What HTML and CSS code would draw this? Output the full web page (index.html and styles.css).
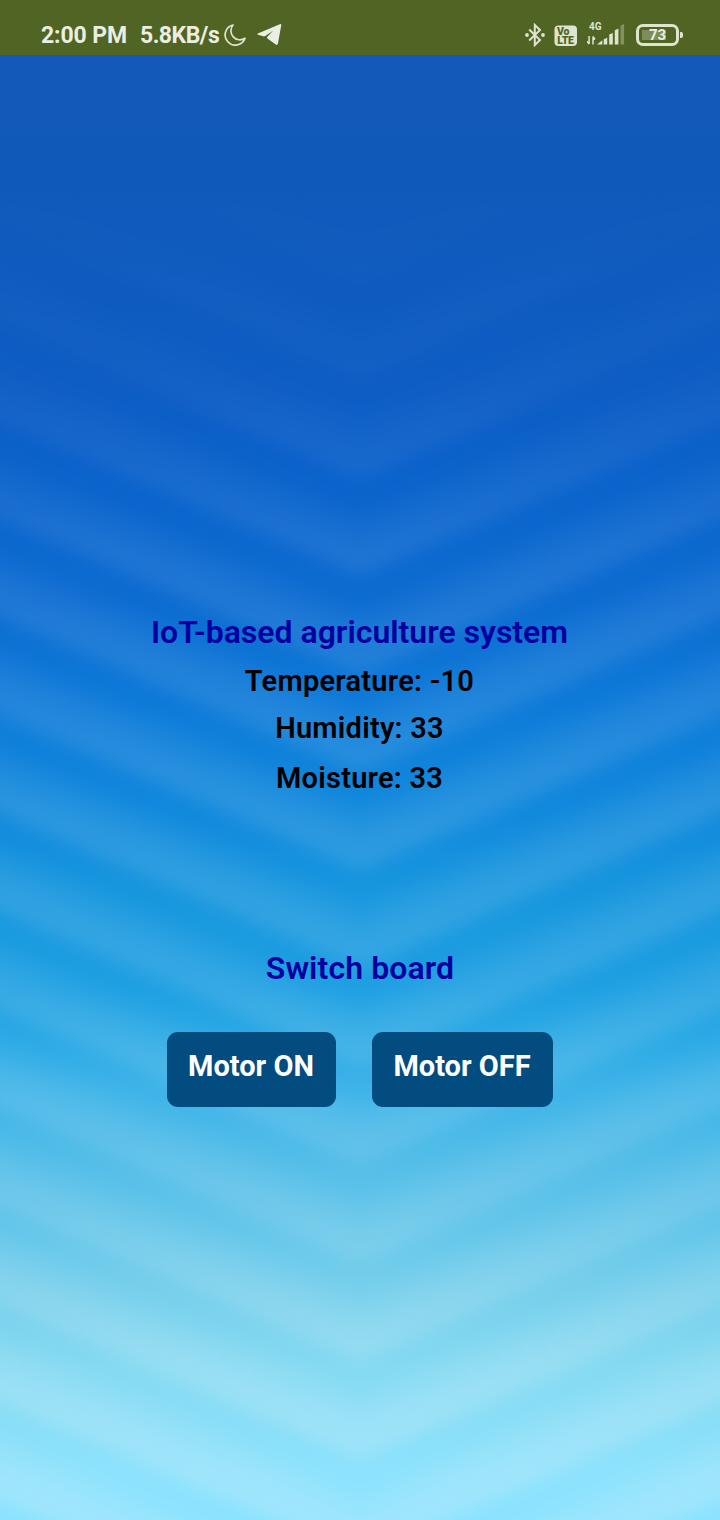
FILE: index.html
```html
<!DOCTYPE html>
<html lang="en">
<head>
<meta charset="utf-8">
<title>IoT-based agriculture system</title>
<link rel="stylesheet" href="styles.css">
</head>
<body>
<div class="screen">
  <svg class="backdrop" width="720" height="1520" viewBox="0 0 720 1520" aria-hidden="true">
    <defs>
      <linearGradient id="base" gradientUnits="userSpaceOnUse" x1="0" y1="0" x2="0" y2="1520">
        <stop offset="0" stop-color="#1559b9"/>
        <stop offset=".08" stop-color="#1359b9"/>
        <stop offset=".1" stop-color="#1059b9"/>
        <stop offset=".2" stop-color="#0e5bc0"/>
        <stop offset=".26" stop-color="#0d5dc6"/>
        <stop offset=".33" stop-color="#0a64cd"/>
        <stop offset=".395" stop-color="#0b6bd1"/>
        <stop offset=".46" stop-color="#0c79d8"/>
        <stop offset=".526" stop-color="#0f87dc"/>
        <stop offset=".585" stop-color="#1595de"/>
        <stop offset=".65" stop-color="#1d9fe2"/>
        <stop offset=".68" stop-color="#28a8e5"/>
        <stop offset=".717" stop-color="#3cb3e8"/>
        <stop offset=".783" stop-color="#5ac1e9"/>
        <stop offset=".849" stop-color="#75cfec"/>
        <stop offset=".9" stop-color="#84daf2"/>
        <stop offset=".97" stop-color="#8be2fd"/>
        <stop offset="1" stop-color="#8ae3ff"/>
      </linearGradient>
      <linearGradient id="left" gradientUnits="userSpaceOnUse" spreadMethod="repeat" x1="360" y1="1453" x2="324.4" y2="1535.7">
        <stop offset="0" stop-color="#ebf2f6" stop-opacity=".25"/>
        <stop offset=".1" stop-color="#ebf2f6" stop-opacity="0"/>
        <stop offset=".35" stop-color="#ebf2f6" stop-opacity=".02"/>
        <stop offset=".65" stop-color="#ebf2f6" stop-opacity=".17"/>
        <stop offset="1" stop-color="#ebf2f6" stop-opacity=".25"/>
      </linearGradient>
      <linearGradient id="right" href="#left" x1="360" y1="1453" x2="395.6" y2="1535.7"/>
      <linearGradient id="fade" gradientUnits="userSpaceOnUse" x1="0" y1="0" x2="0" y2="1520">
        <stop offset=".1" stop-color="#000"/>
        <stop offset=".25" stop-color="#222"/>
        <stop offset=".36" stop-color="#666"/>
        <stop offset=".55" stop-color="#929292"/>
        <stop offset=".8" stop-color="#989898"/>
        <stop offset=".93" stop-color="#fff"/>
      </linearGradient>
      <filter id="soft" filterUnits="userSpaceOnUse" x="-40" y="-40" width="800" height="1600">
        <feGaussianBlur stdDeviation="9"/>
      </filter>
      <mask id="strength" maskUnits="userSpaceOnUse" x="0" y="0" width="720" height="1520">
        <rect width="720" height="1520" fill="url(#fade)"/>
      </mask>
    </defs>
    <rect width="720" height="1520" fill="url(#base)"/>
    <g mask="url(#strength)">
      <g filter="url(#soft)">
        <rect x="-40" y="-40" width="400" height="1600" fill="url(#left)"/>
        <rect x="360" y="-40" width="400" height="1600" fill="url(#right)"/>
      </g>
    </g>
  </svg>

  <header class="status">
    <span class="clock">2:00 PM</span>
    <span class="speed">5.8KB/s</span>
    <svg class="moon" width="24" height="24" viewBox="0 0 24 24"><path d="M10 2A10.2 10.2 0 1 0 22 15.2A9 9 0 0 1 10 2Z"/></svg>
    <svg class="plane" width="25" height="23" viewBox="0 0 25 23"><path d="M.8 10.4 22.8 1.2Q24.5.7 24.2 2.6L21 20.2Q20.5 22.6 18.4 21.2L10.5 15.6Q9.5 14.7 10.4 13.8L16 7.8 8.3 12.9Q7.3 13.6 6.2 13.3L1 11.8Q-.3 11.2.8 10.4Z"/></svg>
    <div class="signals">
      <svg class="bluetooth" width="20" height="24" viewBox="0 0 20 24"><path d="M4.2 6.5 15 17 9.8 22V2L15 7 4.2 17.5"/><circle cx="2" cy="12" r="1.9"/><circle cx="18" cy="12" r="1.9"/></svg>
      <svg class="volte" width="24" height="22" viewBox="0 0 24 22"><rect x=".5" y=".5" width="22.5" height="20.5" rx="4"/><text x="3" y="9.6">Vo</text><text x="3.2" y="18.9">LTE</text></svg>
      <div class="cell">
        <span class="net">4G</span>
        <svg width="38" height="21" viewBox="0 0 38 21"><g class="arrows"><path d="M2.1 12v8M0 17.3l2.1 2.7M6 20.5v-8M6 12.5l2 3"/></g><path d="M10 20.5 15.3 16.2V20.5ZM16.7 15.2 20.2 13.7V20.5H16.7ZM22.2 10.6 25.8 9V20.5H22.2ZM27.8 6.2 31.4 4.6V20.5H27.8Z"/><path class="dim" d="M33.5 1.6 37.1 0V20.5H33.5Z"/></svg>
      </div>
      <div class="battery"><span>73</span></div>
    </div>
  </header>

  <main class="content">
    <h1 class="title">IoT-based agriculture system</h1>
    <p class="reading temperature">Temperature: -10</p>
    <p class="reading humidity">Humidity: 33</p>
    <p class="reading moisture">Moisture: 33</p>
    <h2 class="title board">Switch board</h2>
    <div class="buttons">
      <button class="motor on">Motor ON</button>
      <button class="motor off">Motor OFF</button>
    </div>
  </main>
</div>
</body>
</html>
```
FILE: styles.css
```css
* { box-sizing: border-box; }
body { margin: 0; font-family: Roboto, sans-serif; }
svg { display: block; flex: none; }
.screen { position: relative; width: 720px; height: 1520px; overflow: hidden; }
.backdrop { position: absolute; inset: 0; }
.status {
  position: relative;
  height: 55px;
  padding: 15px 37px 0 41px;
  display: flex;
  align-items: flex-start;
  background: #506423;
  color: #ebeee2;
  font-size: 23px;
  font-weight: 700;
  line-height: 41px;
  white-space: nowrap;
}
.clock { width: 99px; letter-spacing: -.1px; }
.speed { width: 83px; letter-spacing: -.5px; }
.moon { margin-top: 8px; fill: none; stroke: #dfe3d0; stroke-width: 1.7; stroke-linejoin: round; }
.plane { margin: 8px 0 0 10px; fill: #ebeee2; }
.signals { margin-left: auto; display: flex; align-items: flex-start; }
.bluetooth { margin: 8px 9px 0 0; fill: none; stroke: #dfe4cf; stroke-width: 2; }
.bluetooth circle { fill: #dfe4cf; stroke: none; }
.volte { margin: 10px 9px 0 0; fill: #dfe4cf; }
.volte text { fill: #506423; font-size: 10.5px; font-weight: 900; letter-spacing: -.2px; }
.cell { margin: 6px 10px 0 0; width: 39px; }
.net { display: block; height: 0; font-size: 10px; line-height: 12px; padding-left: 2px; color: #dfe4cf; }
.cell svg { margin-top: 3px; fill: #dfe4cf; }
.arrows { fill: none; stroke: #dfe4cf; stroke-width: 1.5; }
.dim { opacity: .35; }
.battery {
  position: relative; width: 43px; height: 22px; margin: 9px 4px 0 0;
  border: 3px solid #dfe4cf; border-radius: 7px;
  background: linear-gradient(#7e8d5c, #7e8d5c) 3px 3px / 24px 10px no-repeat;
  color: #ebeee2; font-size: 15px; line-height: 17px; text-align: center;
}
.battery::after { content: ""; position: absolute; right: -7px; top: 5px; width: 3px; height: 6px; border-radius: 0 2px 2px 0; background: #dfe4cf; }
.content { position: relative; display: flex; flex-direction: column; align-items: center; padding-top: 557px; color: #000; }
.title { margin: 0; padding-right: 1px; color: #0000a0; font-size: 32px; line-height: 40px; font-weight: 600; white-space: nowrap; }
.reading { margin: 0; height: 30px; padding-right: 1px; font-size: 29px; line-height: 30px; font-weight: 600; letter-spacing: .25px; white-space: nowrap; }
.temperature { margin-top: 14px; }
.humidity { margin-top: 17px; }
.moisture { margin-top: 20px; }
.board { margin-top: 155px; padding: 0; letter-spacing: .1px; }
.buttons { display: flex; gap: 36px; margin-top: 44px; }
.motor { height: 75px; padding: 0 1px 7px 0; border: 0; border-radius: 11px; background: #034c7f; color: #fff; font: 700 29px/36px Roboto, sans-serif; white-space: nowrap; }
.on { width: 169px; }
.off { width: 181px; }
```
